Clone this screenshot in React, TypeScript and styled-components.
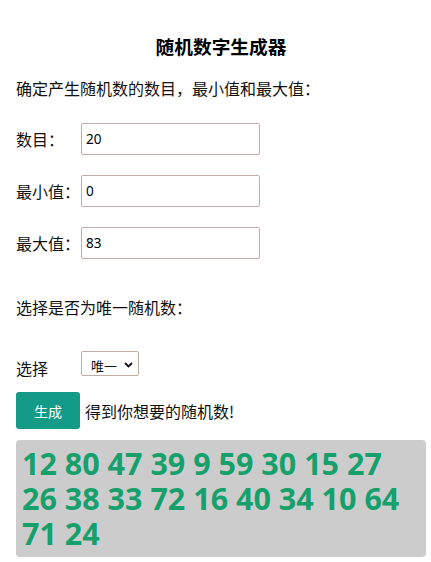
import React from "react";
import styled, { createGlobalStyle } from "styled-components";

const Global = createGlobalStyle`
  html {
    overflow: hidden;
  }
  body {
    margin: 8px 5px 0 8px;
    font-family: "Noto Sans", "Noto Sans CJK SC", sans-serif;
    color: #111;
    background: #fff;
  }
`;

const Page = styled.div`
  display: flex;
  flex-direction: column;
  align-items: flex-start;
  padding: 0 0 0 8px;
`;

const Title = styled.h3`
  align-self: stretch;
  margin: 26px 0 0;
  font-size: 18.7px;
  line-height: 24px;
  font-weight: 700;
  text-align: center;
  font-family: "Noto Sans CJK SC", sans-serif;
  color: #000;
`;

const Para = styled.p<{ $top: number }>`
  margin: ${(p) => p.$top}px 0 0;
  font-size: 16px;
  line-height: 24px;
  font-family: "Noto Sans CJK SC", sans-serif;
`;

const Fields = styled.div`
  display: flex;
  flex-direction: column;
  gap: 20px;
  margin-top: 23px;
`;

const Row = styled.div`
  display: flex;
  align-items: center;
  height: 32px;
`;

const Label = styled.label`
  width: 65px;
  font-size: 16px;
  font-family: "Noto Sans CJK SC", sans-serif;
`;

const Input = styled.input`
  box-sizing: border-box;
  width: 179px;
  height: 32px;
  border: 1px solid #c2aca4;
  border-radius: 2px;
  padding: 0 4px;
  font-size: 13.5px;
  font-family: "Noto Sans", sans-serif;
  color: #000;
  outline: none;
`;

const SelectRow = styled.div`
  display: flex;
  align-items: center;
  margin-top: 32px;
  height: 25px;
`;

const SelectLabel = styled(Label)`
  padding-top: 8px;
`;

const SelectBox = styled.div`
  box-sizing: border-box;
  width: 58px;
  height: 25px;
  border: 1px solid #c2aca4;
  border-radius: 2px;
  display: flex;
  align-items: center;
  padding: 3px 0 0 9px;
  font-size: 13px;
  font-family: "Noto Sans CJK SC", sans-serif;
  gap: 7px;
`;

const Actions = styled.div`
  display: flex;
  align-items: center;
  gap: 5px;
  margin-top: 16px;
`;

const Button = styled.button`
  width: 64px;
  height: 37px;
  border: none;
  border-radius: 3px;
  background: #149b87;
  color: #fff;
  font-size: 14px;
  font-family: "Noto Sans CJK SC", sans-serif;
  padding: 0;
`;

const Hint = styled.span`
  font-size: 16px;
  font-family: "Noto Sans CJK SC", sans-serif;
`;

const Result = styled.div`
  align-self: stretch;
  margin-top: 11px;
  box-sizing: border-box;
  background: #cccccc;
  border-radius: 4px;
  padding: 6px 6px;
  font-family: "Open Sans", sans-serif;
  font-weight: 700;
  font-size: 30.5px;
  line-height: 35px;
  color: #16a06c;
`;

const Chevron = () => (
  <svg width="9" height="6" viewBox="0 0 9 6">
    <path d="M1 1 L4.5 4.5 L8 1" fill="none" stroke="#111" strokeWidth="1.8" />
  </svg>
);

const numbers = [12, 80, 47, 39, 9, 59, 30, 15, 27, 26, 38, 33, 72, 16, 40, 34, 10, 64, 71, 24];

export default function App() {
  return (
    <>
      <Global />
      <Page>
        <Title>随机数字生成器</Title>
        <Para $top={18}>确定产生随机数的数目，最小值和最大值：</Para>
        <Fields>
          <Row>
            <Label>数目：</Label>
            <Input defaultValue="20" />
          </Row>
          <Row>
            <Label>最小值：</Label>
            <Input defaultValue="0" />
          </Row>
          <Row>
            <Label>最大值：</Label>
            <Input defaultValue="83" />
          </Row>
        </Fields>
        <Para $top={36}>选择是否为唯一随机数：</Para>
        <SelectRow>
          <SelectLabel>选择</SelectLabel>
          <SelectBox>
            唯一
            <Chevron />
          </SelectBox>
        </SelectRow>
        <Actions>
          <Button>生成</Button>
          <Hint>得到你想要的随机数!</Hint>
        </Actions>
        <Result>{numbers.join(" ")}</Result>
      </Page>
    </>
  );
}
